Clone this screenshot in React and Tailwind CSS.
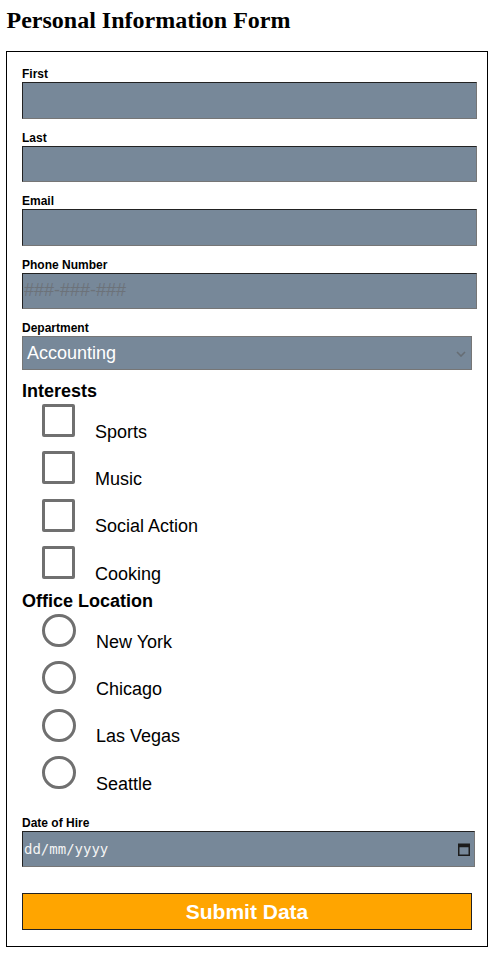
import React from "react";

const fieldBorder =
  "border border-t-[#222222] border-l-[#222222] border-r-[#767676] border-b-[#767676]";

function Label({ children, className = "" }) {
  return (
    <div className={`block h-[14px] text-[12px] leading-[16px] font-bold text-black ${className}`}>{children}</div>
  );
}

function TextField({ label, placeholder }) {
  return (
    <div className="mb-[11px]">
      <Label>{label}</Label>
      <input
        className={`mt-[2px] block h-[36.5px] w-[455px] bg-[#778899] ${fieldBorder} px-[1px] text-[18px] text-white outline-none placeholder:text-[#6c7279]`}
        placeholder={placeholder}
        style={{ fontFamily: '"Liberation Sans", Arial, sans-serif' }}
      />
    </div>
  );
}

function CheckRow({ label }) {
  return (
    <div className="flex h-[33px] items-start">
      <div className="ml-[20px] h-[33px] w-[33px] shrink-0 rounded-[2px] border-[3px] border-[#707070] bg-white" />
      <div className="ml-[20px] mt-[17.6px] whitespace-nowrap text-[18px] leading-[21px] text-black">{label}</div>
    </div>
  );
}

function RadioRow({ label }) {
  return (
    <div className="flex h-[33px] items-start">
      <div className="ml-[20px] h-[33px] w-[34px] shrink-0 rounded-full border-[3px] border-[#707070] bg-white" />
      <div className="ml-[20px] mt-[17.6px] whitespace-nowrap text-[18px] leading-[21px] text-black">{label}</div>
    </div>
  );
}

export default function App() {
  return (
    <div className="bg-white pl-[6px] pt-[6px] text-black">
      <div
        className="h-[28px] pl-[0.5px] text-[24px] leading-[28px] font-bold"
        style={{ fontFamily: '"Liberation Serif", "Times New Roman", serif' }}
      >
        Personal Information Form
      </div>
      <form
        className="mt-[17px] w-[482px] border border-black pb-[15.5px] pl-[15px] pt-[14px]"
        style={{ fontFamily: '"Liberation Sans", Arial, sans-serif' }}
        onSubmit={(e) => e.preventDefault()}
      >
        <TextField label="First" />
        <TextField label="Last" />
        <TextField label="Email" />
        <TextField label="Phone Number" placeholder="###-###-###" />

        <div>
          <Label>Department</Label>
          <div className="mt-[2px] flex h-[34px] w-[450px] items-center justify-between border border-[#767676] bg-[#778899] pl-[4px] pr-[4px]">
            <span className="text-[18px] leading-[21px] text-white">Accounting</span>
            <svg width="10" height="6" viewBox="0 0 10 6" className="mr-[1px] mt-[2px]">
              <polyline points="1,1 5,5 9,1" fill="none" stroke="#666d74" strokeWidth="1.6" />
            </svg>
          </div>
        </div>

        <div className="mt-[11px] h-[21px] text-[18px] leading-[21px] font-bold">Interests</div>
        <div className="mt-[2px] flex flex-col gap-[14.33px]">
          <CheckRow label="Sports" />
          <CheckRow label="Music" />
          <CheckRow label="Social Action" />
          <CheckRow label="Cooking" />
        </div>

        <div className="mt-[12px] h-[21px] text-[18px] leading-[21px] font-bold">Office Location</div>
        <div className="mt-[2px] flex flex-col gap-[14.33px]">
          <RadioRow label="New York" />
          <RadioRow label="Chicago" />
          <RadioRow label="Las Vegas" />
          <RadioRow label="Seattle" />
        </div>

        <Label className="mt-[26px]">Date of Hire</Label>
        <div
          className={`mt-[2px] flex h-[36.5px] w-[453px] items-center justify-between bg-[#778899] ${fieldBorder} pl-[1px] pr-[4px]`}
        >
          <span
            className="text-[14px] leading-[16px] text-[#f4f4f4]"
            style={{ fontFamily: '"DejaVu Sans Mono", "Liberation Mono", monospace' }}
          >
            dd/mm/yyyy
          </span>
          <svg width="12" height="13" viewBox="0 0 12 13">
            <rect x="0.75" y="1.25" width="10.5" height="11" fill="none" stroke="#1c1c1c" strokeWidth="1.5" />
            <rect x="0.75" y="1.25" width="10.5" height="3" fill="#1c1c1c" />
          </svg>
        </div>

        <button
          type="submit"
          className="mt-[25.5px] flex h-[37.5px] w-[450px] items-center justify-center border border-[#222222] bg-[#ffa500] text-[21px] leading-[24px] font-bold text-white"
        >
          Submit Data
        </button>
      </form>
    </div>
  );
}
